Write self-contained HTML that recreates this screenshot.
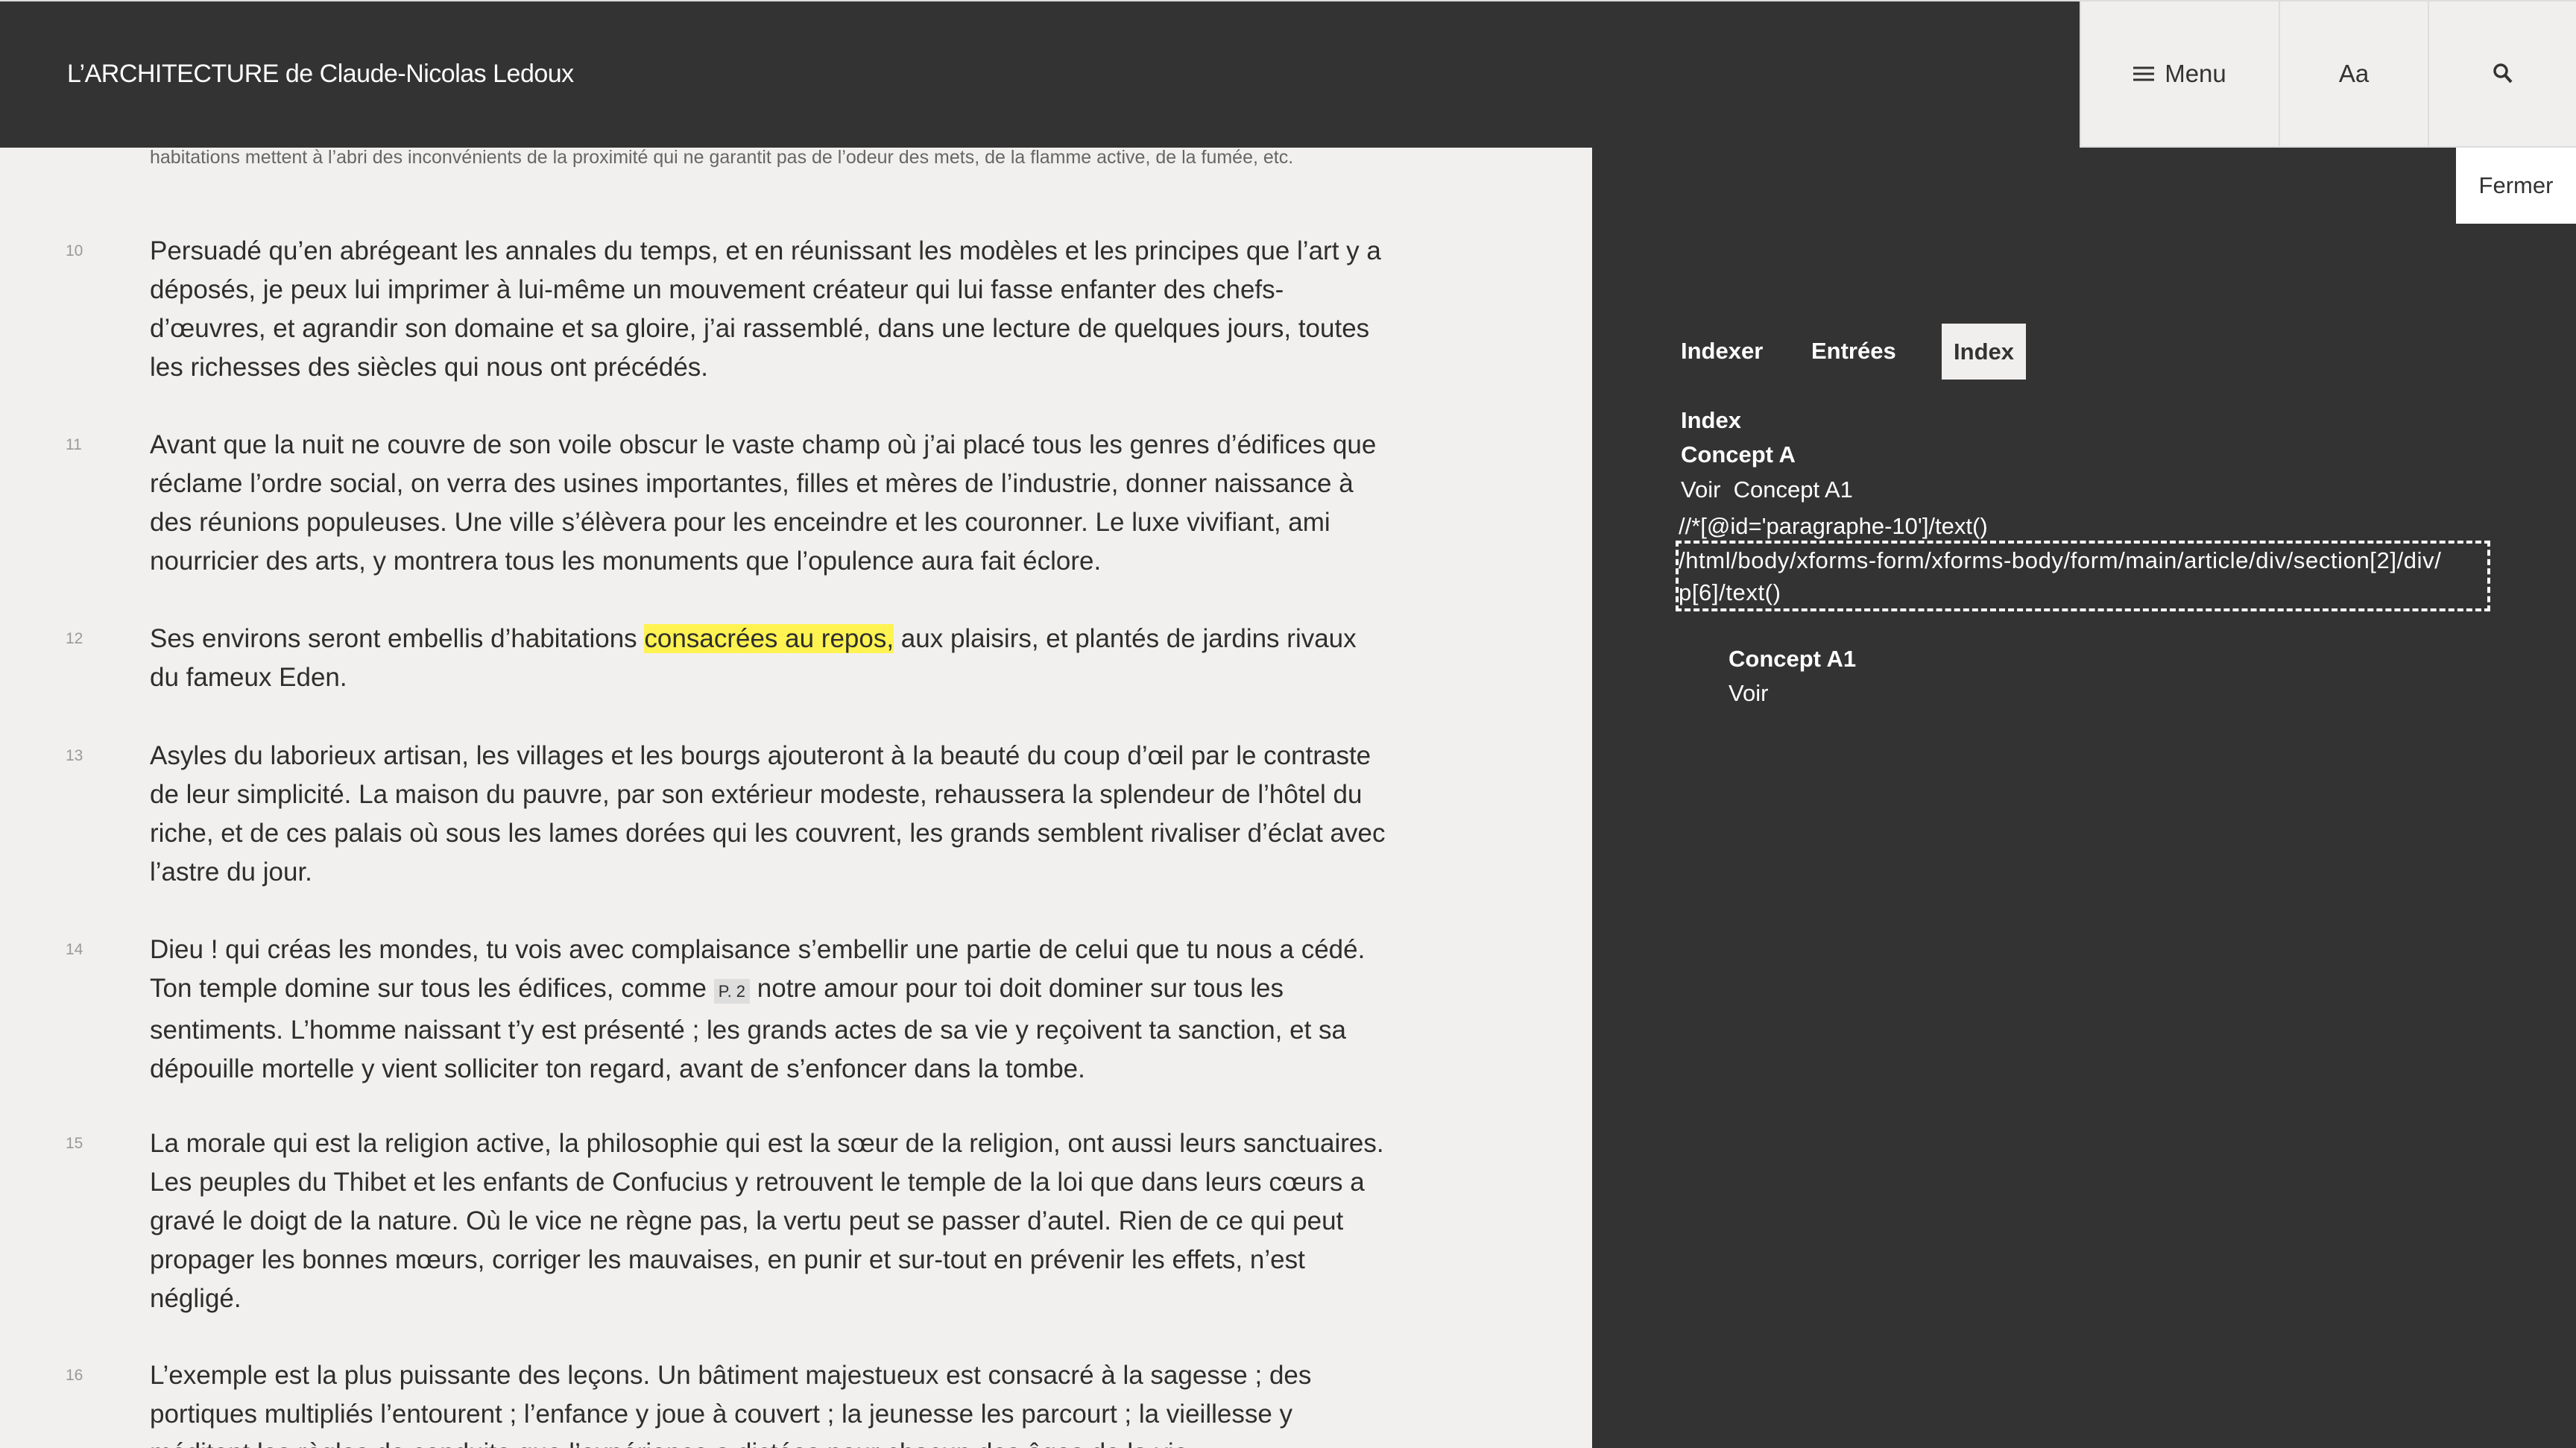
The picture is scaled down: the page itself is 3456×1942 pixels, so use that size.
<!DOCTYPE html>
<html><head><meta charset="utf-8"><style>
*{margin:0;padding:0;box-sizing:border-box}
html,body{width:3456px;height:1942px;overflow:hidden}
body{background:#f1f0ee;font-family:"Liberation Sans",sans-serif;color:#333}
.wrap{position:relative;width:3456px;height:1942px;overflow:hidden}
.hdr{position:absolute;left:0;top:0;width:2790px;height:198px;background:#333;border-top:2px solid #ddd}
.title{position:absolute;left:90px;top:78px;font-size:34px;color:#fff;letter-spacing:-0.5px}
.btn{position:absolute;top:0;height:198px;background:#f0efed;border-left:2px solid #ddd;border-top:2px solid #ddd;border-bottom:2px solid #ddd;font-size:33px;color:#333;display:flex;align-items:center;justify-content:center}
.p{position:absolute;left:201px;font-size:35px;letter-spacing:0;line-height:52px;white-space:nowrap;color:#2e2e2e}
.n{position:absolute;left:88px;font-size:21px;color:#999}
.hl{background:#fff352}
.pg{background:#ddd;font-size:22px;padding:4px 6px;letter-spacing:0}
.panel{position:absolute;left:2136px;top:198px;width:1320px;height:1744px;background:#333;color:#fff;font-size:31px;letter-spacing:0}
.panel div{position:absolute;white-space:nowrap}
b{font-weight:bold}
</style></head><body><div class="wrap">
<div class="hdr"><div class="title">L’ARCHITECTURE de Claude-Nicolas Ledoux</div></div>
<div class="btn" style="left:2790px;width:267px"><svg width="28" height="22" viewBox="0 0 28 22" style="margin-right:14px"><path d="M0 3h28M0 11h28M0 19h28" stroke="#333" stroke-width="3"/></svg>Menu</div>
<div class="btn" style="left:3057px;width:200px">Aa</div>
<div class="btn" style="left:3257px;width:199px"><svg width="28" height="30" viewBox="0 0 28 30"><circle cx="11" cy="11" r="8" fill="none" stroke="#333" stroke-width="3.5"/><path d="M17 17l8 9" stroke="#333" stroke-width="4"/></svg></div>

<div class="p" style="top:196px;font-size:25px;color:#666;line-height:30px">habitations mettent à l’abri des inconvénients de la proximité qui ne garantit pas de l’odeur des mets, de la flamme active, de la fumée, etc.</div>

<div class="n" style="top:325px">10</div>
<div class="p" style="top:311px">Persuadé qu’en abrégeant les annales du temps, et en réunissant les modèles et les principes que l’art y a<br>déposés, je peux lui imprimer à lui-même un mouvement créateur qui lui fasse enfanter des chefs-<br>d’œuvres, et agrandir son domaine et sa gloire, j’ai rassemblé, dans une lecture de quelques jours, toutes<br>les richesses des siècles qui nous ont précédés.</div>

<div class="n" style="top:585px">11</div>
<div class="p" style="top:571px">Avant que la nuit ne couvre de son voile obscur le vaste champ où j’ai placé tous les genres d’édifices que<br>réclame l’ordre social, on verra des usines importantes, filles et mères de l’industrie, donner naissance à<br>des réunions populeuses. Une ville s’élèvera pour les enceindre et les couronner. Le luxe vivifiant, ami<br>nourricier des arts, y montrera tous les monuments que l’opulence aura fait éclore.</div>

<div class="n" style="top:845px">12</div>
<div class="p" style="top:831px">Ses environs seront embellis d’habitations <span class="hl">consacrées au repos,</span> aux plaisirs, et plantés de jardins rivaux<br>du fameux Eden.</div>

<div class="n" style="top:1002px">13</div>
<div class="p" style="top:988px">Asyles du laborieux artisan, les villages et les bourgs ajouteront à la beauté du coup d’œil par le contraste<br>de leur simplicité. La maison du pauvre, par son extérieur modeste, rehaussera la splendeur de l’hôtel du<br>riche, et de ces palais où sous les lames dorées qui les couvrent, les grands semblent rivaliser d’éclat avec<br>l’astre du jour.</div>

<div class="n" style="top:1262px">14</div>
<div class="p" style="top:1248px">Dieu ! qui créas les mondes, tu vois avec complaisance s’embellir une partie de celui que tu nous a cédé.<br>Ton temple domine sur tous les édifices, comme <span class="pg">P. 2</span> notre amour pour toi doit dominer sur tous les<br>sentiments. L’homme naissant t’y est présenté ; les grands actes de sa vie y reçoivent ta sanction, et sa<br>dépouille mortelle y vient solliciter ton regard, avant de s’enfoncer dans la tombe.</div>

<div class="n" style="top:1522px">15</div>
<div class="p" style="top:1508px">La morale qui est la religion active, la philosophie qui est la sœur de la religion, ont aussi leurs sanctuaires.<br>Les peuples du Thibet et les enfants de Confucius y retrouvent le temple de la loi que dans leurs cœurs a<br>gravé le doigt de la nature. Où le vice ne règne pas, la vertu peut se passer d’autel. Rien de ce qui peut<br>propager les bonnes mœurs, corriger les mauvaises, en punir et sur-tout en prévenir les effets, n’est<br>négligé.</div>

<div class="n" style="top:1833px">16</div>
<div class="p" style="top:1819px">L’exemple est la plus puissante des leçons. Un bâtiment majestueux est consacré à la sagesse ; des<br>portiques multipliés l’entourent ; l’enfance y joue à couvert ; la jeunesse les parcourt ; la vieillesse y<br>méditent les règles de conduite que l’expérience a dictées pour chacun des âges de la vie.</div>

<div class="panel">
<div style="left:1159px;top:0;width:161px;height:102px;background:#fff;color:#333;display:flex;align-items:center;justify-content:center;font-size:31px">Fermer</div>
<div style="left:119px;top:255px"><b>Indexer</b></div>
<div style="left:294px;top:255px"><b>Entrées</b></div>
<div style="left:469px;top:236px;width:113px;height:75px;background:#f0efed;color:#333;display:flex;align-items:center;justify-content:center"><b>Index</b></div>
<div style="left:119px;top:348px"><b>Index</b></div>
<div style="left:119px;top:394px"><b>Concept A</b></div>
<div style="left:119px;top:441px">Voir &nbsp;Concept A1</div>
<div style="left:116px;top:490px">//*[@id='paragraphe-10']/text()</div>
<div style="left:112px;top:527px;width:1093px;height:95px;border:4px dashed #fff"></div>
<div style="left:116px;top:532px;line-height:43px;letter-spacing:0.6px">/html/body/xforms-form/xforms-body/form/main/article/div/section[2]/div/<br>p[6]/text()</div>
<div style="left:183px;top:668px"><b>Concept A1</b></div>
<div style="left:183px;top:714px">Voir</div>
</div>
</div></body></html>
